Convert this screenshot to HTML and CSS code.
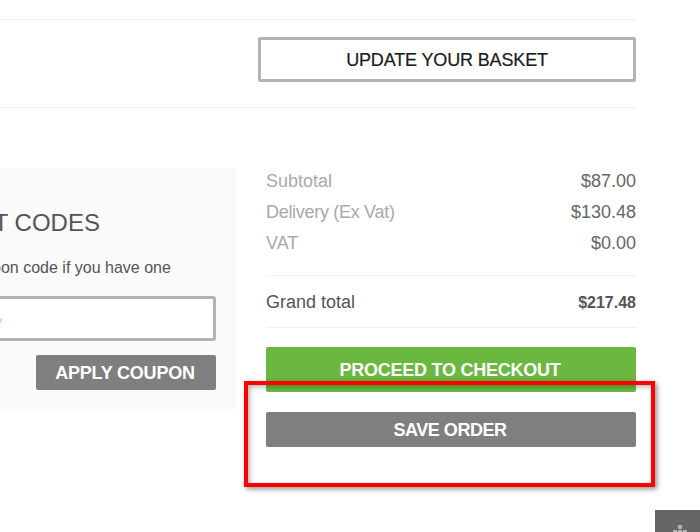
FILE: index.html
```html
<!DOCTYPE html>
<html lang="en">
<head>
<meta charset="utf-8">
<title>Basket</title>
<link rel="stylesheet" href="styles.css">
</head>
<body>
<main class="page">
  <div class="update-row">
    <button class="btn-outline">UPDATE YOUR BASKET</button>
  </div>
  <div class="columns">
    <section class="coupon">
      <h2 class="coupon-title">DISCOUNT CODES</h2>
      <p class="coupon-text">Enter your coupon code if you have one</p>
      <div class="coupon-input"></div>
      <div class="coupon-actions">
        <button class="btn btn-grey btn-apply">APPLY COUPON</button>
      </div>
    </section>
    <section class="summary">
      <div class="row"><span class="label">Subtotal</span><span class="value">$87.00</span></div>
      <div class="row"><span class="label label-tight">Delivery (Ex Vat)</span><span class="value">$130.48</span></div>
      <div class="row"><span class="label">VAT</span><span class="value">$0.00</span></div>
      <div class="grand"><span>Grand total</span><strong class="grand-value">$217.48</strong></div>
      <button class="btn btn-green">PROCEED TO CHECKOUT</button>
      <button class="btn btn-grey btn-save">SAVE ORDER</button>
    </section>
  </div>
</main>
<div class="highlight"></div>
<div class="corner">
  <svg class="corner-icon" width="20" height="12" viewBox="0 0 20 12" aria-hidden="true">
    <rect x="8" y="0" width="4" height="4"/>
    <rect x="3" y="5" width="4" height="4"/>
    <rect x="8" y="5" width="4" height="4"/>
    <rect x="13" y="5" width="4" height="4"/>
  </svg>
</div>
</body>
</html>
```
FILE: styles.css
```css
* { box-sizing: border-box; }
html, body { margin: 0; padding: 0; height: 100%; overflow: hidden; background: #fff; }
body { font-family: "Liberation Sans", Arial, sans-serif; position: relative; }

.page { width: 806px; margin-left: -170px; padding-top: 19px; }

.update-row {
  display: flex; justify-content: flex-end;
  border-top: 1px solid #f2f2f2; border-bottom: 1px solid #f2f2f2;
  padding: 17px 0 25px;
  height: 89px;
}
.btn-outline {
  width: 378px; height: 45px;
  border: 3px solid #b3b3b3; border-radius: 2px; background: #fff;
  font: 18px "Liberation Sans", Arial, sans-serif; color: #1a1a1a;
  letter-spacing: -0.15px;
  padding: 2px 0 0;
  -webkit-text-stroke: 0.2px #1a1a1a;
}

.columns { display: flex; gap: 30px; align-items: flex-start; margin-top: 57px; }

.coupon {
  width: 406px; height: 242px; margin-top: 3px;
  background: #fafafa;
  padding: 42px 20px 0 58px;
}
.coupon-title { margin: 0 0 0 -5px; font-size: 24px; line-height: 26px; font-weight: 400; color: #555; white-space: nowrap; }
.coupon-text { margin: 22px 0 0; font-size: 16px; line-height: 20px; color: #555; white-space: nowrap; }
.coupon-input {
  position: relative;
  margin: 18px 0 0; height: 45px;
  background: #fff; border: 3px solid #b3b3b3; border-radius: 3px;
}
.coupon-input::after {
  content: ""; position: absolute; left: 109px; top: 19px;
  width: 2px; height: 5px; background: #bfe6fb;
}
.coupon-actions { display: flex; justify-content: flex-end; margin-top: 14px; }

.summary { width: 370px; padding-top: 1px; }
.row { display: flex; justify-content: space-between; font-size: 18px; line-height: 31px; }
.label { color: #a9a9a9; }
.label-tight { letter-spacing: -0.3px; }
.value { color: #666; }
.grand {
  display: flex; justify-content: space-between; align-items: center;
  margin-top: 16px; height: 53px; padding-top: 2px;
  border-top: 1px solid #f2f2f2; border-bottom: 1px solid #f2f2f2;
  font-size: 18px; color: #555;
}
.grand-value { font-size: 16px; font-weight: 700; }

.btn {
  display: block; border: 0; border-radius: 2px; padding: 2px 2px 0 0;
  font: 700 18px "Liberation Sans", Arial, sans-serif; color: #fff;
  letter-spacing: -0.25px;
}
.btn-grey { background: #7f7f7f; height: 35px; }
.btn-green { background: #6ab840; width: 100%; height: 45px; margin-top: 19px; }
.btn-apply { width: 180px; letter-spacing: -0.2px; }
.btn-save { width: 100%; margin-top: 20px; letter-spacing: -0.45px; }

.highlight {
  position: absolute; left: 244px; top: 381px; width: 411px; height: 106px;
  border: 4px solid #f00;
  box-shadow: 2px 2px 5px rgba(0, 0, 0, .45), inset 2px 2px 5px rgba(0, 0, 0, .3);
}
.corner {
  position: absolute; left: 655px; top: 510px; width: 45px; height: 22px;
  background: #666;
}
.corner-icon { position: absolute; left: 15px; top: 15px; fill: #b5b5b5; }
```
